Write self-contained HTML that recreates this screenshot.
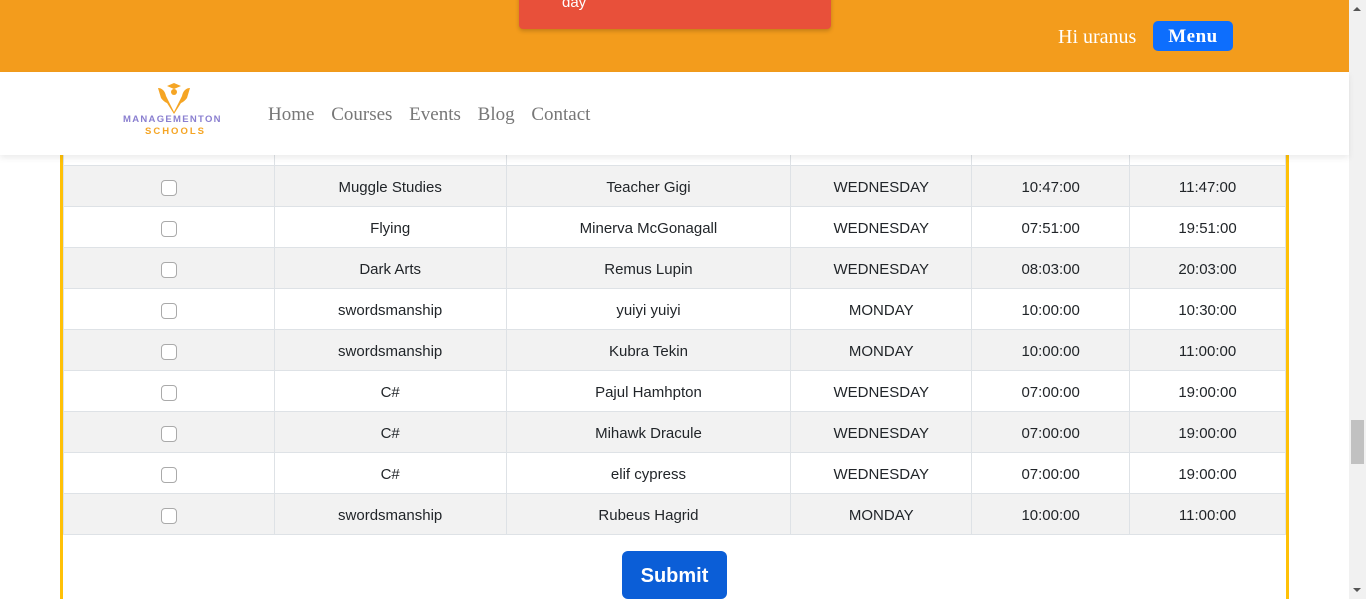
<!DOCTYPE html>
<html><head><meta charset="utf-8"><style>
*{box-sizing:border-box;margin:0;padding:0}
html,body{width:1366px;height:599px;overflow:hidden}
body{background:#fff;font-family:"Liberation Sans",sans-serif;position:relative}
.top{position:absolute;left:0;top:0;width:1349px;height:72px;background:#f39c1c}
.toast{position:absolute;left:519px;top:-10px;width:312px;height:39px;background:#e8503a;border-radius:4px;box-shadow:0 2px 4px rgba(0,0,0,.2);color:#fff;font-size:15px;padding:4px 0 0 43px}
.hi{position:absolute;left:1058px;top:26px;color:#fff;font-family:"Liberation Serif",serif;font-size:20px}
.menu{position:absolute;left:1153px;top:21px;width:80px;height:30px;background:#0d6efd;border-radius:5px;color:#fff;font-family:"Liberation Serif",serif;font-weight:bold;font-size:19px;text-align:center;line-height:31px;letter-spacing:.5px}
.nav{position:absolute;left:0;top:72px;width:1349px;height:83px;background:#fff;box-shadow:0 3px 6px rgba(0,0,0,.08);z-index:3}
.links{position:absolute;left:268px;top:32px;font-family:"Liberation Serif",serif;font-size:19px;color:#777}
.links span{margin-right:12px}
.logo1{position:absolute;left:123px;top:42px;font-size:9.5px;font-weight:bold;color:#8a7fd0;letter-spacing:1.3px}
.logo2{position:absolute;left:145px;top:54px;font-size:9.5px;font-weight:bold;color:#f5a524;letter-spacing:2px}
.frame{position:absolute;left:60px;top:140px;width:1229px;height:470px;border-left:3px solid #ffc107;border-right:3px solid #ffc107}
table{position:absolute;left:63px;top:124px;border-collapse:collapse;width:1223px;font-size:15px;color:#212529}
td{border:1px solid #dee2e6;height:41px;text-align:center;vertical-align:middle;padding-top:2px}
tr:nth-child(even) td{background:#f2f2f2}
.cb{display:inline-block;width:16px;height:16px;border:1px solid #aaa;border-radius:4px;background:#fff;vertical-align:middle}
.sub{position:absolute;left:622px;top:551px;width:105px;height:48px;background:#0b5ed7;border-radius:6px;color:#fff;font-weight:bold;font-size:20px;text-align:center;line-height:50px}
.sb{position:absolute;left:1349px;top:0;width:17px;height:599px;background:#f1f1f1}
.thumb{position:absolute;left:1351px;top:420px;width:13px;height:44px;background:#c1c1c1}
</style></head><body>
<div class="top"><div class="toast">day</div><div class="hi">Hi uranus</div><div class="menu">Menu</div></div>
<div class="nav">
<svg style="position:absolute;left:157px;top:10px" width="34" height="32" viewBox="0 0 34 32"><path d="M10 4l7-3 7 3-7 3z" fill="#f5a524"/><path d="M1 6c4 0 7 3 8 8l8 16 8-16c1-5 4-8 8-8l-3 10c-3 4-6 5-6 5l-7 11-7-11s-3-1-6-5z" fill="#f5a524"/><circle cx="17" cy="10" r="3" fill="#f5a524"/></svg>
<div class="logo1">MANAGEMENTON</div><div class="logo2">SCHOOLS</div>
<div class="links"><span>Home</span> <span>Courses</span> <span>Events</span> <span>Blog</span> <span>Contact</span></div>
</div>
<div class="frame"></div>
<table>
<colgroup><col style="width:211px"><col style="width:232px"><col style="width:285px"><col style="width:181px"><col style="width:158px"><col style="width:156px"></colgroup>
<tr><td></td><td></td><td></td><td></td><td></td><td></td></tr>
<tr><td><span class="cb"></span></td><td>Muggle Studies</td><td>Teacher Gigi</td><td>WEDNESDAY</td><td>10:47:00</td><td>11:47:00</td></tr>
<tr><td><span class="cb"></span></td><td>Flying</td><td>Minerva McGonagall</td><td>WEDNESDAY</td><td>07:51:00</td><td>19:51:00</td></tr>
<tr><td><span class="cb"></span></td><td>Dark Arts</td><td>Remus Lupin</td><td>WEDNESDAY</td><td>08:03:00</td><td>20:03:00</td></tr>
<tr><td><span class="cb"></span></td><td>swordsmanship</td><td>yuiyi yuiyi</td><td>MONDAY</td><td>10:00:00</td><td>10:30:00</td></tr>
<tr><td><span class="cb"></span></td><td>swordsmanship</td><td>Kubra Tekin</td><td>MONDAY</td><td>10:00:00</td><td>11:00:00</td></tr>
<tr><td><span class="cb"></span></td><td>C#</td><td>Pajul Hamhpton</td><td>WEDNESDAY</td><td>07:00:00</td><td>19:00:00</td></tr>
<tr><td><span class="cb"></span></td><td>C#</td><td>Mihawk Dracule</td><td>WEDNESDAY</td><td>07:00:00</td><td>19:00:00</td></tr>
<tr><td><span class="cb"></span></td><td>C#</td><td>elif cypress</td><td>WEDNESDAY</td><td>07:00:00</td><td>19:00:00</td></tr>
<tr><td><span class="cb"></span></td><td>swordsmanship</td><td>Rubeus Hagrid</td><td>MONDAY</td><td>10:00:00</td><td>11:00:00</td></tr>
</table>
<div class="sub">Submit</div>
<div class="sb"></div><div class="thumb"></div>
<div style="position:absolute;left:1353px;top:7px;border:4px solid transparent;border-bottom:4px solid #555;border-top:0"></div>
<div style="position:absolute;left:1353px;top:588px;border:4px solid transparent;border-top:4px solid #555;border-bottom:0"></div>
</body></html>
